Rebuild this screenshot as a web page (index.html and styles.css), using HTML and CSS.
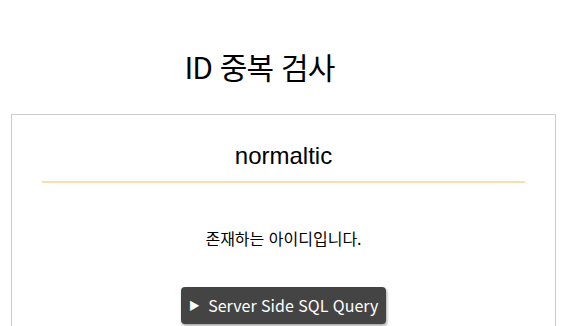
FILE: index.html
```html
<!DOCTYPE html>
<html lang="ko">
<head>
    <meta charset="utf-8">
    <link rel="stylesheet" href="styles.css">
</head>
<body>
    <div class="container">
        <h1 class="title">ID 중복 검사</h1>
        <div class="result-box">
            <div class="user-id">normaltic</div>
            <p class="message">존재하는 아이디입니다.</p>
            <button class="query-btn" type="button"><span class="arrow">&#9654;</span> Server Side SQL Query</button>
        </div>
    </div>
</body>
</html>
```

FILE: styles.css
```css
/* General Styles */
body {
    margin: 0;
    padding: 0;
    font-family: "Noto Sans CJK KR", "Noto Sans", sans-serif;
    background-color: #ffffff;
    color: #000000;
}

.container {
    padding: 0 15px 0 11px;
}

.title {
    margin: 0 0 24px;
    padding: 42px 48px 0 0;
    font-size: 30px;
    font-weight: 400;
    letter-spacing: -0.8px;
    line-height: 48px;
    text-align: center;
}

/* Result Box */
.result-box {
    border: 1px solid #cccccc;
    padding: 26px 30px 40px;
    text-align: center;
}

.user-id {
    font-family: "Liberation Sans", Arial, sans-serif;
    font-size: 24px;
    line-height: 30px;
    padding-bottom: 10px;
    border-bottom: 2px solid #f7dfb0;
}

.message {
    margin: 44px 0 38px;
    font-size: 16px;
    line-height: 22px;
}

.query-btn {
    font-family: "Noto Sans CJK KR", "Noto Sans", sans-serif;
    font-size: 16px;
    color: #ffffff;
    background-color: #444444;
    border: none;
    border-radius: 4px;
    padding: 6px 8px 7px;
    box-shadow: 1px 2px 3px rgba(0, 0, 0, 0.35);
    cursor: pointer;
}

.arrow {
    font-size: 11px;
    vertical-align: 2px;
    margin-right: 4px;
}
```
